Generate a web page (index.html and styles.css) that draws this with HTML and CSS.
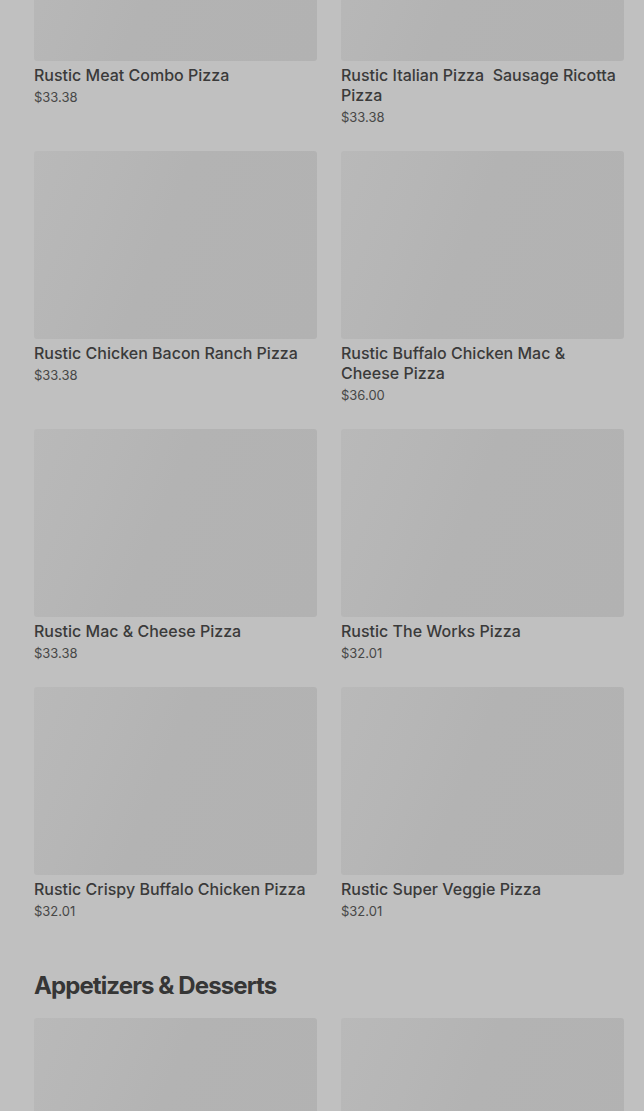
FILE: index.html
```html
<!DOCTYPE html>
<html lang="en">
<head>
    <meta charset="UTF-8">
    <meta name="viewport" content="width=device-width, initial-scale=1.0">
    <title>Menu</title>
    <link rel="stylesheet" href="styles.css">
</head>
<body>
    <main class="menu">
        <!-- Pizzas -->
        <section class="category first">
            <div class="grid">
                <div class="item">
                    <div class="thumb"></div>
                    <div class="name">Rustic Meat Combo Pizza</div>
                    <div class="price">$33.38</div>
                </div>
                <div class="item">
                    <div class="thumb"></div>
                    <div class="name">Rustic Italian Pizza&nbsp; Sausage Ricotta Pizza</div>
                    <div class="price">$33.38</div>
                </div>
                <div class="item">
                    <div class="thumb"></div>
                    <div class="name">Rustic Chicken Bacon Ranch Pizza</div>
                    <div class="price">$33.38</div>
                </div>
                <div class="item">
                    <div class="thumb"></div>
                    <div class="name">Rustic Buffalo Chicken Mac &amp; Cheese Pizza</div>
                    <div class="price">$36.00</div>
                </div>
                <div class="item">
                    <div class="thumb"></div>
                    <div class="name">Rustic Mac &amp; Cheese Pizza</div>
                    <div class="price">$33.38</div>
                </div>
                <div class="item">
                    <div class="thumb"></div>
                    <div class="name">Rustic The Works Pizza</div>
                    <div class="price">$32.01</div>
                </div>
                <div class="item">
                    <div class="thumb"></div>
                    <div class="name">Rustic Crispy Buffalo Chicken Pizza</div>
                    <div class="price">$32.01</div>
                </div>
                <div class="item">
                    <div class="thumb"></div>
                    <div class="name">Rustic Super Veggie Pizza</div>
                    <div class="price">$32.01</div>
                </div>
            </div>
        </section>

        <!-- Appetizers -->
        <section class="category">
            <h2>Appetizers &amp; Desserts</h2>
            <div class="grid">
                <div class="item">
                    <div class="thumb"></div>
                </div>
                <div class="item">
                    <div class="thumb"></div>
                </div>
            </div>
        </section>
    </main>
</body>
</html>
```

FILE: styles.css
```css
body {
    font-family: Inter, "Noto Sans", sans-serif;
    margin: 0;
    padding: 0;
    background-color: #c0c0c0;
    color: #3a3a3a;
    overflow: hidden;
    height: 1111px;
}
.menu {
    padding: 0 20px 0 34px;
}
.category.first {
    margin-top: -127px; /* page is scrolled */
}
.category h2 {
    margin: 50px 0 16px;
    font-size: 24px;
    line-height: 32px;
    font-weight: 700;
    letter-spacing: -0.9px;
    color: #363636;
}
.grid {
    display: grid;
    grid-template-columns: 283px 283px;
    column-gap: 24px;
    row-gap: 25px;
}
.thumb {
    height: 188px;
    border-radius: 3px;
    background: linear-gradient(112deg, #b9b9b9 0%, #b6b6b6 25%, #b3b3b3 45%, #b2b2b2 100%);
}
.name {
    margin-top: 4px;
    font-size: 16px;
    line-height: 20px;
    font-weight: 500;
    color: #3a3a3a;
}
.price {
    margin-top: 3px;
    font-size: 13px;
    line-height: 18px;
    color: #474747;
}
```
